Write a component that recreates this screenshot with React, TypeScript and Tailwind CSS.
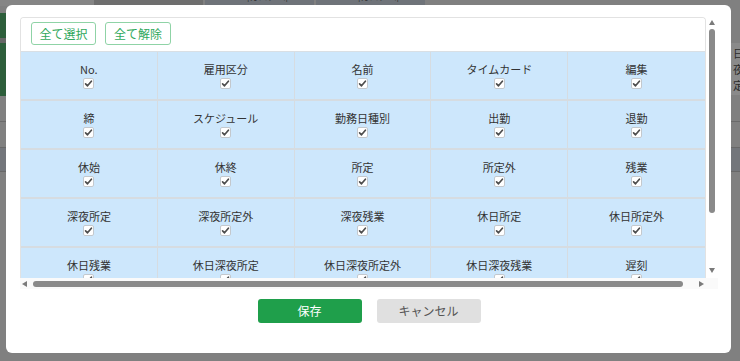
import React from "react";

const labels = [
  "No.", "雇用区分", "名前", "タイムカード", "編集",
  "締", "スケジュール", "勤務日種別", "出勤", "退勤",
  "休始", "休終", "所定", "所定外", "残業",
  "深夜所定", "深夜所定外", "深夜残業", "休日所定", "休日所定外",
  "休日残業", "休日深夜所定", "休日深夜所定外", "休日深夜残業", "遅刻",
];

function Check() {
  return (
    <svg width="11" height="11" viewBox="0 0 11 11" className="block">
      <rect x="0.5" y="0.5" width="10" height="10" rx="1.5" fill="#ffffff" stroke="#c3c8cd" />
      <path d="M2.6 5.9 L4.5 7.8 L8.4 3.2" fill="none" stroke="#4d4d4d" strokeWidth="1.7" strokeLinecap="round" strokeLinejoin="round" />
    </svg>
  );
}

function Tri({ dir }: { dir: "up" | "down" | "left" | "right" }) {
  const pts =
    dir === "up" ? "0,5 3,0 6,5" :
    dir === "down" ? "0,0 6,0 3,5" :
    dir === "left" ? "5,0 5,6 0,3" : "0,0 0,6 5,3";
  const w = dir === "up" || dir === "down" ? 6 : 5;
  const h = dir === "up" || dir === "down" ? 5 : 6;
  return (
    <svg width={w} height={h} viewBox={`0 0 ${w} ${h}`} className="block">
      <polygon points={pts} fill="#7a7a7a" />
    </svg>
  );
}

export default function App() {
  return (
    <div className="relative w-[740px] h-[361px] overflow-hidden bg-[#808080] font-['Noto_Sans_CJK_JP',sans-serif]">
      {/* underlying page (dimmed) */}
      <div className="absolute left-0 top-0 w-[94px] h-[6px] bg-[#858585]" />
      <div className="absolute left-[94px] top-0 w-[109px] h-[6px] bg-[#6e6e6e]" />
      <div className="absolute left-[205px] top-0 w-[109px] h-[6px] bg-[#6f7379] overflow-hidden">
        <span className="absolute left-[42px] top-[-9px] text-[9px] leading-[12px] text-[#2e2e2e]">|カスタム|</span>
      </div>
      <div className="absolute left-[316px] top-0 w-[109px] h-[6px] bg-[#6f7379] overflow-hidden">
        <span className="absolute left-[42px] top-[-9px] text-[9px] leading-[12px] text-[#2e2e2e]">|カスタム|</span>
      </div>
      <div className="absolute left-0 top-[13px] w-[6px] h-[25px] bg-[#2d5e3b]" />
      <div className="absolute left-0 top-[38px] w-[6px] h-[5px] bg-[#666666]" />
      <div className="absolute left-0 top-[43px] w-[6px] h-[53px] bg-[#2d5e3b]" />
      <div className="absolute left-0 top-[121px] w-[6px] h-[1px] bg-[#6a6a6a]" />
      <div className="absolute left-0 top-[147px] w-[6px] h-[25px] bg-[#73767b] border-t border-b border-[#686868]" />
      <div className="absolute left-[731px] top-[43px] w-[9px] h-[52px] bg-[#8a8a8a] overflow-hidden">
        <div className="pl-[2px] pt-[2px] text-[11px] leading-[16px] text-[#2b2b2b]">
          <div>日</div>
          <div>夜</div>
          <div>定</div>
        </div>
      </div>
      <div className="absolute left-[731px] top-[121px] w-[9px] h-[1px] bg-[#6a6a6a]" />
      <div className="absolute left-[731px] top-[147px] w-[9px] h-[25px] bg-[#73767b] border-t border-b border-[#686868]" />

      {/* modal */}
      <div className="absolute left-[6px] top-[5px] w-[725px] h-[348px] rounded-[6px] bg-white pl-[14px] pr-[13px] pt-[12px] flex flex-col">
        <div className="w-[698px] flex flex-col">
          <div className="flex h-[261px]">
            <div className="w-[686px] flex flex-col border border-b-0 border-[#e2e2e2] rounded-t-[4px] overflow-hidden">
              <div className="h-[33px] flex items-start gap-[9px] pl-[10px] pt-[4px] shrink-0 bg-white">
                <button className="w-[65px] h-[23px] rounded-[3px] border border-[#8fd3a6] text-[#2fa85c] text-[12px] leading-[21px] bg-white">全て選択</button>
                <button className="w-[66px] h-[23px] rounded-[3px] border border-[#8fd3a6] text-[#2fa85c] text-[12px] leading-[21px] bg-white">全て解除</button>
              </div>
              <div className="flex-1 overflow-hidden bg-[#cde7fc] border-t border-[#d9dfe4]">
                <div className="grid grid-cols-5">
                  {labels.map((l, i) => (
                    <div
                      key={i}
                      className={
                        "h-[49px] flex flex-col items-center pt-[10px] border-b-2 border-[#d6dce1] " +
                        (i % 5 === 4 ? "" : "border-r")
                      }
                    >
                      <span className="text-[11px] leading-[14px] text-[#333333] whitespace-nowrap">{l}</span>
                      <div className="mt-[2px]">
                        <Check />
                      </div>
                    </div>
                  ))}
                </div>
              </div>
            </div>
            <div className="w-[12px] flex flex-col items-center bg-white pt-[3px] pb-[5px]">
              <Tri dir="up" />
              <div className="mt-[4px] w-[6px] h-[184px] rounded-full bg-[#8a8a8a]" />
              <div className="flex-1" />
              <Tri dir="down" />
            </div>
          </div>
          <div className="h-[11px] flex items-center bg-[#fafafa] pl-[2px]">
            <Tri dir="left" />
            <div className="ml-[6px] w-[650px] h-[6px] rounded-full bg-[#8a8a8a]" />
            <div className="flex-1" />
            <Tri dir="right" />
            <div className="w-[14px]" />
          </div>
        </div>
        <div className="mt-[10px] flex justify-center gap-[15px]">
          <button className="w-[104px] h-[24px] rounded-[3px] bg-[#1f9f4b] text-white text-[12px] leading-[24px]">保存</button>
          <button className="w-[104px] h-[24px] rounded-[3px] bg-[#e0e0e0] text-[#555555] text-[12px] leading-[24px]">キャンセル</button>
        </div>
      </div>
    </div>
  );
}
